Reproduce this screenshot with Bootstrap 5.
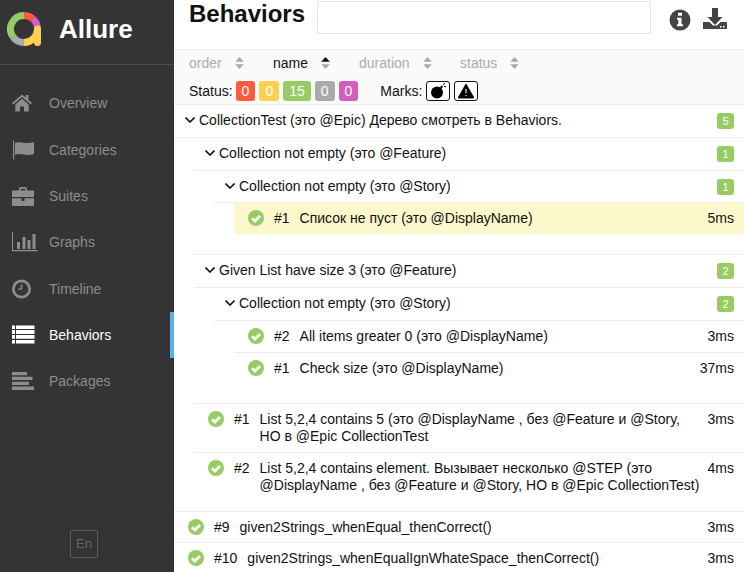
<!DOCTYPE html>
<html lang="ru">
<head>
<meta charset="utf-8">
<title>Allure</title>
<link rel="stylesheet" href="https://cdn.jsdelivr.net/npm/bootstrap@5.3.0/dist/css/bootstrap.min.css">
<style>
html,body{height:572px;overflow:hidden}
body{font-family:"Liberation Sans",Arial,sans-serif;font-size:14px;line-height:16px;color:#111;background:#fff}
.shell{height:572px}
.side{width:174px;background:#343434;flex:none}
.brand{height:65px;border-bottom:1px solid #4d4d4d;padding:0 0 6px 7px;gap:18px;color:#fff;font-size:26px;font-weight:700}
.menu{padding-top:15.15px}
.menu-item{height:46.33px;color:#8d8d8d;padding-left:12px;gap:13px;position:relative}
.menu-item svg{width:24px;height:24px;flex:none;fill:#8d8d8d;overflow:visible}
.menu-item.on{color:#fff}
.menu-item.on svg{fill:#fff}
.menu-item.on::after{content:"";position:absolute;right:0;top:0;bottom:0;width:4px;background:#5cb0ef}
.lang{width:28px;height:28px;border:1px solid #5c5c5c;border-radius:2px;color:#666;font-size:13px;margin:0 0 14px 70px}
.pane{width:570px;flex:none;overflow:hidden}
.top{height:49px;padding-left:15px}
.top h1{font-size:24px;font-weight:700;line-height:28px;margin:0;width:128px;color:#111}
.searchbox{width:334px;height:33px;border:1px solid #e4e4e4;margin-top:1px}
.top-ico{fill:#444;width:24px;height:24px}
.tools{background:#fafafa;border-top:1px solid #eee;border-bottom:1px solid #eee;height:56px;padding-left:15px}
.sorts{height:27px;padding-bottom:1px;color:#aaa}
.sort{gap:13px}
.sort.act{color:#111}
.arrows{width:9px;height:12px;fill:#aaa}
.statline{height:27px;padding-top:1px}
.st{height:20px;border-radius:3px;color:#fff;padding:0 6px;margin-right:4px;font-size:14px;line-height:20px}
.mk{width:24px;height:20px;border:1px solid #111;border-radius:3px;background:#fff;margin-right:4px}
.mk svg{width:16px;height:16px}
.line{border-bottom:1px solid #eee;padding:0 10px 2px 11px;height:33px}
.line.short{height:32px;padding-bottom:1px}
.l1{margin-left:20px}
.l2{margin-left:40px}
.chev{width:10px;height:6px;margin-right:4px;fill:none;stroke:#111;stroke-width:1.6;flex:none}
.cnt{width:17px;height:16px;border-radius:3px;background:#97cc64;color:#fff;font-size:11px;line-height:16px;text-align:center;margin-top:2px}
.leaf{height:32px;padding:7px 10px 8px 14px;border-bottom:1px solid #eee}
.leaf.flat{border-bottom:0}
.leaf .tick{width:16px;height:16px;flex:none;margin-right:10px}
.leaf .num{flex:none;margin-right:10px}
.leaf .ttl{flex:1 1 auto}
.leaf .dur{flex:none;margin-left:6px;text-align:right}
.m60{margin-left:60px}
.m20{margin-left:20px}
.hl{background:#fcf8cb;border-bottom:0;height:31px}
.spc{border-bottom:1px solid #eee}
.twoline{height:auto;padding-bottom:7px}
.twoline .ttl{line-height:17px}
.thin{height:31px}
</style>
</head>
<body>
<svg width="0" height="0" class="position-absolute">
<defs>
<symbol id="tick" viewBox="0 0 16 16"><circle cx="8" cy="8" r="8" fill="#97cc64"/><path d="M4 8.200 6.900 11 12 5.900" fill="none" stroke="#fff" stroke-width="2.800"/></symbol>
<symbol id="ud" viewBox="0 0 10 14"><path d="M5 0l5 5.500H0zM0 8.500h10L5 14z"/></symbol>
</defs>
</svg>
<div class="shell d-flex">
<aside class="side d-flex flex-column">
<div class="brand d-flex align-items-center">
<svg width="34" height="34" viewBox="0 0 34 34">
<g fill="none" stroke-width="7">
<path d="M5.940 24.740A13.500 13.500 0 0 1 17 3.500" stroke="#97cc64"/>
<path d="M17 3.500A13.500 13.500 0 0 1 25.680 6.660" stroke="#fd5a3e"/>
<path d="M25.680 6.660A13.500 13.500 0 0 1 30.500 17" stroke="#d35ebe"/>
<path d="M5.940 24.740A13.500 13.500 0 0 0 17 30.500" stroke="#aaa"/>
<path d="M17 30.500A13.500 13.500 0 0 0 30.500 17" stroke="#ffd050"/>
<path d="M30.500 17V30.500" stroke="#ffd050" stroke-linecap="round"/>
</g>
</svg>
<span>Allure</span>
</div>
<nav class="menu">
<div class="menu-item d-flex align-items-center"><svg viewBox="0 0 24 24"><path d="M10 3.500 0 12l1.200 1.400L10 5.900l8.800 7.500L20 12l-3.500-3V4h-2.800v2.600zM10 7.700 3.300 13.400V20.500h4.700v-5h4v5h4.700v-7.100z"/></svg><span>Overview</span></div>
<div class="menu-item d-flex align-items-center"><svg viewBox="0 0 24 24"><path d="M1 2.500h1.200v19H1zM3 5C8.500 2.500 13 7 22 4v12c-8 3-13-1.500-19 .8z"/></svg><span>Categories</span></div>
<div class="menu-item d-flex align-items-center"><svg viewBox="0 0 24 24"><path d="M7 6.500V4.500A1.500 1.500 0 0 1 8.500 3h5A1.500 1.500 0 0 1 15 4.500v2h6a1 1 0 0 1 1 1V13H0V7.500a1 1 0 0 1 1-1zm1.700 0h4.600V4.700H8.700zM0 14.300h9.500V17h3v-2.700H22V21a1 1 0 0 1-1 1H1a1 1 0 0 1-1-1z"/></svg><span>Suites</span></div>
<div class="menu-item d-flex align-items-center"><svg viewBox="0 0 24 24"><path d="M0 2h1v18h24.500v1.200H0zM5 12h3v7H5zM10.500 7h3v12h-3zM15.500 10h3v9h-3zM20.500 4h3v15h-3z"/></svg><span>Graphs</span></div>
<div class="menu-item d-flex align-items-center"><svg viewBox="0 0 24 24"><path fill-rule="evenodd" d="M9.500 2.500a9.500 9.500 0 1 1 0 19 9.500 9.500 0 0 1 0-19zm0 2.700a6.800 6.800 0 1 0 0 13.600 6.800 6.800 0 0 0 0-13.600zM10.300 7.500v5.300H6v-1.400h2.800V7.500z"/></svg><span>Timeline</span></div>
<div class="menu-item on d-flex align-items-center"><svg viewBox="0 0 24 24"><path d="M0 2.500h3v3.600H0zM4 2.500h18.500v3.600H4zM0 7.100h3v3.800H0zM4 7.100h18.500v3.800H4zM0 12h3v3.800H0zM4 12h18.500v3.800H4zM0 17h3v3.500H0zM4 17h18.500v3.500H4z"/></svg><span>Behaviors</span></div>
<div class="menu-item d-flex align-items-center"><svg viewBox="0 0 24 24"><path d="M0 3h15v3.300H0zM0 7.800h20.500v3.300H0zM0 12.700h17v3.300H0zM0 17.500h22V21H0z"/></svg><span>Packages</span></div>
</nav>
<div class="lang d-flex align-items-center justify-content-center mt-auto">En</div>
</aside>
<main class="pane">
<div class="top d-flex align-items-start">
<h1>Behaviors</h1>
<div class="searchbox"></div>
<svg class="top-ico" style="margin:8px 0 0 17px" viewBox="0 0 24 24"><path fill-rule="evenodd" d="M12 1.500a10.500 10.500 0 1 1 0 21 10.500 10.500 0 0 1 0-21zM10 4.800v3h4v-3zM9 9.800v2h1.300v4.400H9v2h6v-2h-1.500V9.800z"/></svg>
<svg class="top-ico" style="margin:8px 0 0 11px" viewBox="0 0 24 24"><path fill-rule="evenodd" d="M9 0h6v9h4.500L12 17 4.500 9H9zM0 14h6.500l3.500 3.500h4L17.500 14H24v7H0zM17 18h1.600v1.400H17zM20 18h1.600v1.400H20z"/></svg>
</div>
<div class="tools">
<div class="sorts d-flex align-items-center">
<div class="sort d-flex align-items-center" style="width:84px"><span>order</span><svg class="arrows"><use href="#ud"/></svg></div>
<div class="sort act d-flex align-items-center" style="width:86px"><span>name</span><svg class="arrows" viewBox="0 0 10 14"><path d="M5 0l5 5.500H0z" fill="#111"/><path d="M0 8.500h10L5 14z"/></svg></div>
<div class="sort d-flex align-items-center" style="width:101px"><span>duration</span><svg class="arrows"><use href="#ud"/></svg></div>
<div class="sort d-flex align-items-center"><span>status</span><svg class="arrows"><use href="#ud"/></svg></div>
</div>
<div class="statline d-flex align-items-center">
<span style="margin-right:3px">Status:</span>
<span class="st" style="background:#fd5a3e">0</span>
<span class="st" style="background:#ffd050">0</span>
<span class="st" style="background:#97cc64">15</span>
<span class="st" style="background:#aaa">0</span>
<span class="st" style="background:#d35ebe;margin-right:22px">0</span>
<span style="margin-right:4px">Marks:</span>
<span class="mk d-flex align-items-center justify-content-center"><svg viewBox="0 0 16 16"><circle cx="7" cy="9.500" r="6"/><path d="M10.500 5l2-2" stroke="#111" stroke-width="2"/><path d="M13 1.500l2 -1M14 3.500l2 0" stroke="#111"/></svg></span>
<span class="mk d-flex align-items-center justify-content-center"><svg viewBox="0 0 16 16"><path fill-rule="evenodd" d="M8 1 16 15H0zM7 5.500v5h2v-5zM7 11.500v2h2v-2z" stroke="#111" stroke-linejoin="round"/></svg></span>
</div>
</div>
<div class="line d-flex align-items-center justify-content-between"><span class="d-flex align-items-center"><svg class="chev" viewBox="0 0 10 6"><path d="M.5.500 5 5 9.500.500"/></svg>CollectionTest (это @Epic) Дерево смотреть в Behaviors.</span><span class="cnt">5</span></div>
<div class="line l1 d-flex align-items-center justify-content-between"><span class="d-flex align-items-center"><svg class="chev" viewBox="0 0 10 6"><path d="M.5.500 5 5 9.500.500"/></svg>Collection not empty (это @Feature)</span><span class="cnt">1</span></div>
<div class="line short l2 d-flex align-items-center justify-content-between"><span class="d-flex align-items-center"><svg class="chev" viewBox="0 0 10 6"><path d="M.5.500 5 5 9.500.500"/></svg>Collection not empty (это @Story)</span><span class="cnt">1</span></div>
<div class="leaf hl m60 d-flex"><svg class="tick"><use href="#tick"/></svg><span class="num">#1</span><span class="ttl">Список не пуст (это @DisplayName)</span><span class="dur">5ms</span></div>
<div class="spc m20" style="height:21px"></div>
<div class="line l1 d-flex align-items-center justify-content-between"><span class="d-flex align-items-center"><svg class="chev" viewBox="0 0 10 6"><path d="M.5.500 5 5 9.500.500"/></svg>Given List have size 3 (это @Feature)</span><span class="cnt">2</span></div>
<div class="line l2 d-flex align-items-center justify-content-between"><span class="d-flex align-items-center"><svg class="chev" viewBox="0 0 10 6"><path d="M.5.500 5 5 9.500.500"/></svg>Collection not empty (это @Story)</span><span class="cnt">2</span></div>
<div class="leaf m60 d-flex"><svg class="tick"><use href="#tick"/></svg><span class="num">#2</span><span class="ttl">All items greater 0 (это @DisplayName)</span><span class="dur">3ms</span></div>
<div class="leaf flat m60 d-flex"><svg class="tick"><use href="#tick"/></svg><span class="num">#1</span><span class="ttl">Check size (это @DisplayName)</span><span class="dur">37ms</span></div>
<div class="spc m20" style="height:19px"></div>
<div class="leaf twoline m20 d-flex"><svg class="tick"><use href="#tick"/></svg><span class="num">#1</span><span class="ttl">List 5,2,4 contains 5 (это @DisplayName , без @Feature и @Story,<br>НО в @Epic CollectionTest</span><span class="dur">3ms</span></div>
<div class="leaf twoline flat m20 d-flex"><svg class="tick"><use href="#tick"/></svg><span class="num">#2</span><span class="ttl">List 5,2,4 contains element. Вызывает несколько @STEP (это<br>@DisplayName , без @Feature и @Story, НО в @Epic CollectionTest)</span><span class="dur">4ms</span></div>
<div class="spc" style="height:11px"></div>
<div class="leaf thin d-flex"><svg class="tick"><use href="#tick"/></svg><span class="num">#9</span><span class="ttl">given2Strings_whenEqual_thenCorrect()</span><span class="dur">3ms</span></div>
<div class="leaf thin d-flex"><svg class="tick"><use href="#tick"/></svg><span class="num">#10</span><span class="ttl">given2Strings_whenEqualIgnWhateSpace_thenCorrect()</span><span class="dur">3ms</span></div>
</main>
</div>
</body>
</html>
